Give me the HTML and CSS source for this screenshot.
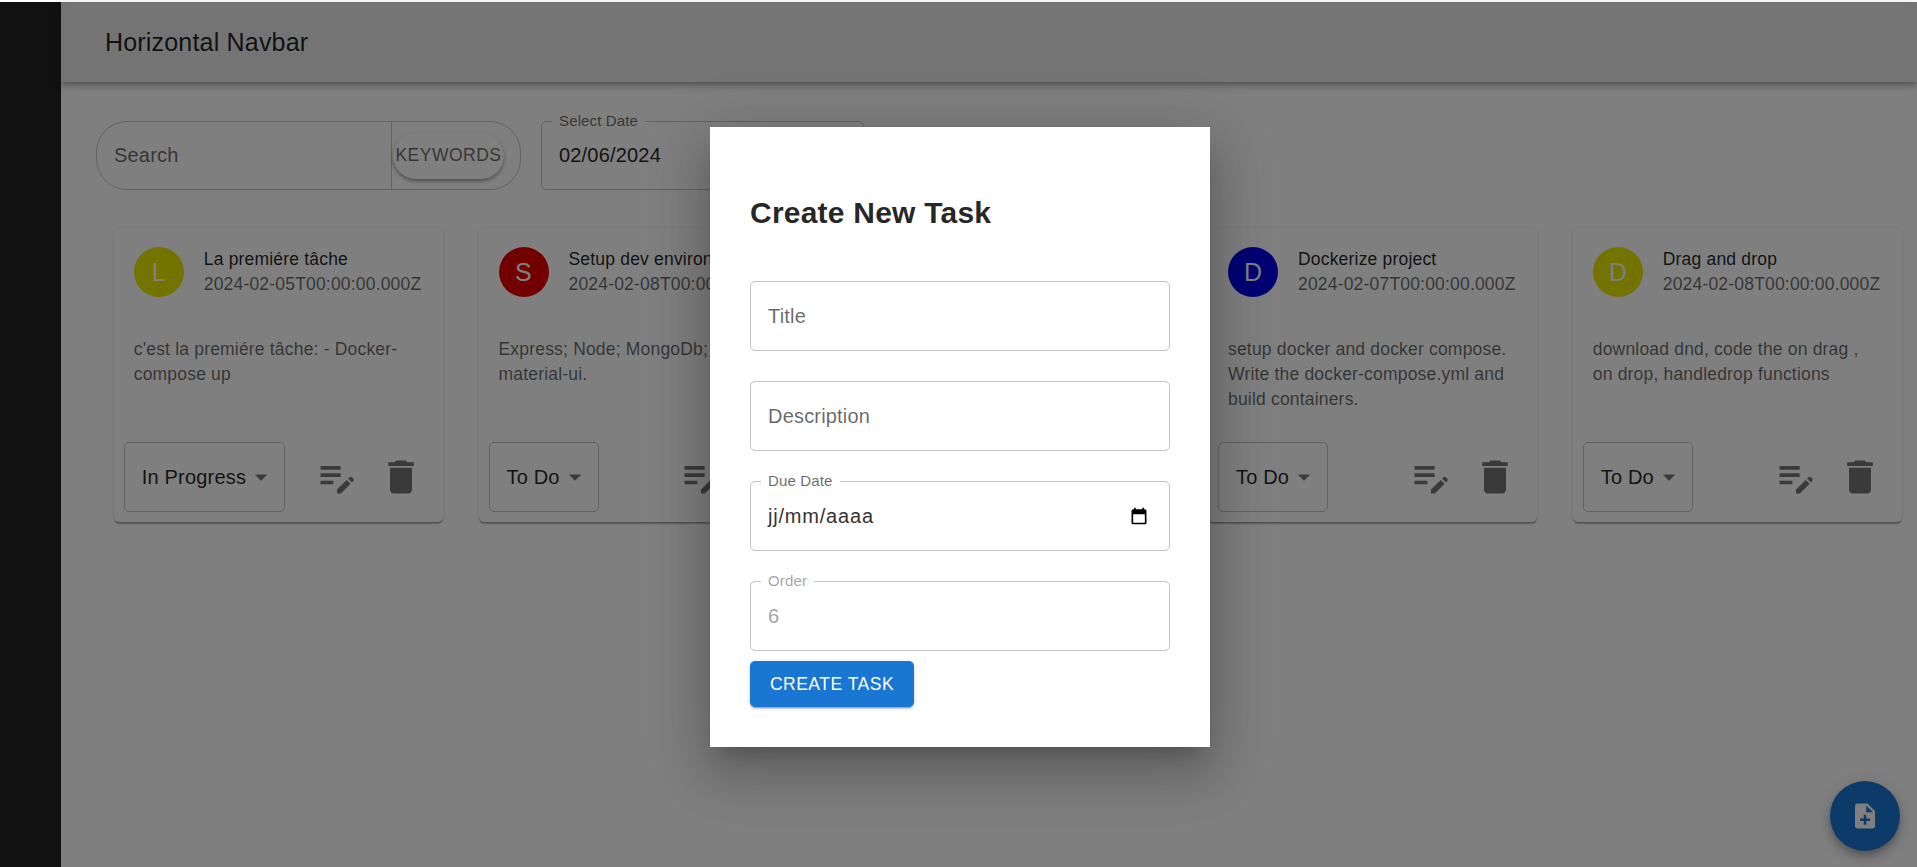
FILE: index.html
```html
<!DOCTYPE html>
<html lang="en">
<head>
  <meta charset="UTF-8">
  <meta name="viewport" content="width=device-width, initial-scale=1.0">
  <title>Task Board</title>
  <link rel="stylesheet" href="styles.css">
</head>
<body>
  <div class="app">
    <aside class="sidebar"></aside>

    <main class="main">
      <header class="navbar">Horizontal Navbar</header>

      <!-- Search + date filter -->
      <section class="filters">
        <div class="search">
          <span class="search-text">Search</span>
          <div class="search-action"><button type="button" class="keywords">KEYWORDS</button></div>
        </div>
        <div class="date-filter">
          <span class="notch-label">Select Date</span>
          <span class="date-value">02/06/2024</span>
        </div>
      </section>

      <!-- Task cards -->
      <section class="cards">
        <article class="card">
          <div class="card-head">
            <div class="avatar yellow">L</div>
            <div>
              <div class="card-title">La premiére tâche</div>
              <div class="card-date">2024-02-05T00:00:00.000Z</div>
            </div>
          </div>
          <p class="card-desc">c'est la premiére tâche: - Docker-compose up</p>
          <div class="card-actions">
            <div class="status"><span>In Progress</span><svg viewBox="0 0 24 24"><path d="M7 10l5 5 5-5z"/></svg></div>
            <button type="button" class="icon-btn push"><svg viewBox="0 0 24 24"><path d="M3 10h11v2H3zm0-2h11V6H3zm0 8h7v-2H3zm15.01-3.13.71-.71c.39-.39 1.02-.39 1.41 0l.71.71c.39.39.39 1.02 0 1.41l-.71.71zm-.71.71-5.3 5.3V21h2.12l5.3-5.3z"/></svg></button>
            <button type="button" class="icon-btn"><svg viewBox="0 0 24 24"><path d="M6 19c0 1.1.9 2 2 2h8c1.1 0 2-.9 2-2V7H6v12zM19 4h-3.5l-1-1h-5l-1 1H5v2h14V4z"/></svg></button>
          </div>
        </article>

        <article class="card">
          <div class="card-head">
            <div class="avatar red">S</div>
            <div>
              <div class="card-title">Setup dev environment</div>
              <div class="card-date">2024-02-08T00:00:00.000Z</div>
            </div>
          </div>
          <p class="card-desc">Express; Node; MongoDb;<br>material-ui.</p>
          <div class="card-actions">
            <div class="status"><span>To Do</span><svg viewBox="0 0 24 24"><path d="M7 10l5 5 5-5z"/></svg></div>
            <button type="button" class="icon-btn push"><svg viewBox="0 0 24 24"><path d="M3 10h11v2H3zm0-2h11V6H3zm0 8h7v-2H3zm15.01-3.13.71-.71c.39-.39 1.02-.39 1.41 0l.71.71c.39.39.39 1.02 0 1.41l-.71.71zm-.71.71-5.3 5.3V21h2.12l5.3-5.3z"/></svg></button>
            <button type="button" class="icon-btn"><svg viewBox="0 0 24 24"><path d="M6 19c0 1.1.9 2 2 2h8c1.1 0 2-.9 2-2V7H6v12zM19 4h-3.5l-1-1h-5l-1 1H5v2h14V4z"/></svg></button>
          </div>
        </article>

        <!-- fully behind the dialog -->
        <article class="card"></article>

        <article class="card">
          <div class="card-head">
            <div class="avatar blue">D</div>
            <div>
              <div class="card-title">Dockerize project</div>
              <div class="card-date">2024-02-07T00:00:00.000Z</div>
            </div>
          </div>
          <p class="card-desc">setup docker and docker compose. Write the docker-compose.yml and build containers.</p>
          <div class="card-actions">
            <div class="status"><span>To Do</span><svg viewBox="0 0 24 24"><path d="M7 10l5 5 5-5z"/></svg></div>
            <button type="button" class="icon-btn push"><svg viewBox="0 0 24 24"><path d="M3 10h11v2H3zm0-2h11V6H3zm0 8h7v-2H3zm15.01-3.13.71-.71c.39-.39 1.02-.39 1.41 0l.71.71c.39.39.39 1.02 0 1.41l-.71.71zm-.71.71-5.3 5.3V21h2.12l5.3-5.3z"/></svg></button>
            <button type="button" class="icon-btn"><svg viewBox="0 0 24 24"><path d="M6 19c0 1.1.9 2 2 2h8c1.1 0 2-.9 2-2V7H6v12zM19 4h-3.5l-1-1h-5l-1 1H5v2h14V4z"/></svg></button>
          </div>
        </article>

        <article class="card">
          <div class="card-head">
            <div class="avatar yellow">D</div>
            <div>
              <div class="card-title">Drag and drop</div>
              <div class="card-date">2024-02-08T00:00:00.000Z</div>
            </div>
          </div>
          <p class="card-desc">download dnd, code the on drag , on drop, handledrop functions</p>
          <div class="card-actions">
            <div class="status"><span>To Do</span><svg viewBox="0 0 24 24"><path d="M7 10l5 5 5-5z"/></svg></div>
            <button type="button" class="icon-btn push"><svg viewBox="0 0 24 24"><path d="M3 10h11v2H3zm0-2h11V6H3zm0 8h7v-2H3zm15.01-3.13.71-.71c.39-.39 1.02-.39 1.41 0l.71.71c.39.39.39 1.02 0 1.41l-.71.71zm-.71.71-5.3 5.3V21h2.12l5.3-5.3z"/></svg></button>
            <button type="button" class="icon-btn"><svg viewBox="0 0 24 24"><path d="M6 19c0 1.1.9 2 2 2h8c1.1 0 2-.9 2-2V7H6v12zM19 4h-3.5l-1-1h-5l-1 1H5v2h14V4z"/></svg></button>
          </div>
        </article>
      </section>

      <button type="button" class="fab"><svg viewBox="0 0 24 24"><path d="M14 2H6c-1.1 0-1.99.9-1.99 2L4 20c0 1.1.89 2 1.99 2H18c1.1 0 2-.9 2-2V8l-6-6zm2 14h-3v3h-2v-3H8v-2h3v-3h2v3h3v2zm-3-7V3.5L18.5 9H13z"/></svg></button>
    </main>

    <!-- Create task dialog -->
    <div class="overlay">
      <form class="modal">
        <h2 class="modal-title">Create New Task</h2>
        <div class="field"><span class="placeholder">Title</span></div>
        <div class="field"><span class="placeholder">Description</span></div>
        <div class="field">
          <span class="notch-label">Due Date</span>
          <span class="date-mask">jj/mm/aaaa</span>
          <svg class="calendar" viewBox="0 0 24 24"><path d="M19 4h-1V2h-2v2H8V2H6v2H5c-1.11 0-1.99.9-1.99 2L3 20a2 2 0 0 0 2 2h14c1.1 0 2-.9 2-2V6c0-1.1-.9-2-2-2zm0 16H5V10h14v10z"/></svg>
        </div>
        <div class="field disabled">
          <span class="notch-label">Order</span>
          <span>6</span>
        </div>
        <button type="button" class="submit">CREATE TASK</button>
      </form>
    </div>
  </div>
</body>
</html>
```

FILE: styles.css
```css
html, body {
  margin: 0;
  height: 100%;
  overflow: hidden;
}

body {
  background-color: #fff;
  padding-top: 2px;
  box-sizing: border-box;
  font-family: "Liberation Sans", Arial, sans-serif;
  color: rgba(0,0,0,0.87);
}

button {
  font-family: inherit;
  border: none;
  cursor: pointer;
}

.app {
  position: relative;
  display: flex;
  height: 865px;
}

.sidebar {
  width: 61px;
  flex: none;
  background-color: #222;
}

.main {
  flex: 1;
  min-width: 0;
  background-color: #fff;
}

.navbar {
  height: 80px;
  padding-left: 44px;
  display: flex;
  align-items: center;
  font-size: 25px;
  letter-spacing: 0.0075em;
  background-color: #e9e9e9;
  box-shadow: 0 2.5px 5px -1px rgba(0,0,0,0.2), 0 5px 6px 0 rgba(0,0,0,0.14), 0 1px 12px 0 rgba(0,0,0,0.12);
}

/* filters */
.filters {
  display: flex;
  gap: 20px;
  margin: 39px 0 0 35px;
}

.search {
  width: 425px;
  height: 69px;
  box-sizing: border-box;
  display: flex;
  justify-content: space-between;
  border: 1px solid rgba(0,0,0,0.23);
  border-radius: 31px;
}

.search-text {
  align-self: center;
  padding-left: 17px;
  font-size: 20px;
  letter-spacing: 0.00938em;
  color: rgba(0,0,0,0.6);
}

.search-action {
  width: 129px;
  box-sizing: border-box;
  display: flex;
  align-items: center;
  padding-left: 1px;
  border-left: 1px solid rgba(0,0,0,0.23);
}

.keywords {
  width: 111px;
  height: 46px;
  padding: 0;
  font-size: 17.5px;
  letter-spacing: 0.02857em;
  color: rgba(0,0,0,0.6);
  background-color: #fff;
  border-radius: 23px;
  box-shadow: 0 3px 4px -1px rgba(0,0,0,0.2), 0 2px 3px 0 rgba(0,0,0,0.14), 0 1px 6px 0 rgba(0,0,0,0.12);
}

.date-filter {
  position: relative;
  width: 323px;
  height: 69px;
  box-sizing: border-box;
  display: flex;
  align-items: center;
  padding-left: 17px;
  border: 1px solid rgba(0,0,0,0.23);
  border-radius: 5px;
  font-size: 20px;
  letter-spacing: 0.00938em;
}

.notch-label {
  position: absolute;
  top: -10px;
  left: 10px;
  padding: 0 7px;
  font-size: 15px;
  line-height: 17px;
  letter-spacing: 0.00938em;
  color: rgba(0,0,0,0.6);
  background-color: #fff;
}

/* cards */
.cards {
  display: grid;
  grid-template-columns: repeat(5, 328.75px);
  gap: 36px;
  margin: 38px 0 0 52.75px;
}

.card {
  height: 294px;
  display: flex;
  flex-direction: column;
  background-color: #fff;
  border-radius: 5px;
  box-shadow: 0 2.5px 1px -1px rgba(0,0,0,0.2), 0 1px 1px 0 rgba(0,0,0,0.14), 0 1px 4px 0 rgba(0,0,0,0.12);
}

.card-head {
  display: flex;
  gap: 20px;
  padding: 19px 20px 20px;
  font-size: 17.5px;
  line-height: 24.5px;
  letter-spacing: 0.01071em;
}

.avatar {
  width: 50px;
  height: 50px;
  flex: none;
  display: flex;
  align-items: center;
  justify-content: center;
  border-radius: 50%;
  font-size: 25px;
  color: #fff;
}

.yellow { background-color: #e6e600; }
.red { background-color: #e60000; }
.blue { background-color: #0000e6; }

.card-title {
  white-space: nowrap;
}

.card-date {
  white-space: nowrap;
  color: rgba(0,0,0,0.6);
}

.card-desc {
  flex: 1;
  margin: 0;
  padding: 20px 20px 0;
  font-size: 17.5px;
  line-height: 25px;
  letter-spacing: 0.01071em;
  color: rgba(0,0,0,0.6);
}

.card-actions {
  display: flex;
  align-items: center;
  padding: 0 10px 10px;
}

.status {
  height: 70px;
  box-sizing: border-box;
  display: flex;
  align-items: center;
  padding: 0 8px 0 17px;
  border: 1px solid rgba(0,0,0,0.23);
  border-radius: 5px;
  font-size: 20px;
  letter-spacing: 0.00938em;
}

.status svg {
  width: 30px;
  height: 30px;
  fill: rgba(0,0,0,0.54);
}

.icon-btn {
  width: 64px;
  height: 64px;
  padding: 10px;
  background: none;
}

.icon-btn svg {
  display: block;
  width: 44px;
  height: 44px;
  fill: rgba(0,0,0,0.54);
}

.push {
  margin-left: auto;
}

.fab {
  position: absolute;
  right: 17px;
  bottom: 16px;
  width: 70px;
  height: 70px;
  padding: 0;
  display: flex;
  align-items: center;
  justify-content: center;
  border-radius: 50%;
  background-color: #1976d2;
  box-shadow: 0 4px 6px -1px rgba(0,0,0,0.2), 0 7.5px 12px 0 rgba(0,0,0,0.14), 0 2px 22px 0 rgba(0,0,0,0.12);
}

.fab svg {
  width: 30px;
  height: 30px;
  fill: #fff;
}

/* dialog */
.overlay {
  position: absolute;
  inset: 0;
  display: flex;
  align-items: center;
  justify-content: center;
  padding: 5px 0 0 3px;
  box-sizing: border-box;
  background-color: rgba(0,0,0,0.5);
}

.modal {
  width: 500px;
  height: 620px;
  box-sizing: border-box;
  padding: 40px;
  display: flex;
  flex-direction: column;
  gap: 30px;
  background-color: #fff;
  box-shadow: 0 14px 19px -9px rgba(0,0,0,0.2), 0 30px 48px 4px rgba(0,0,0,0.14), 0 11px 58px 10px rgba(0,0,0,0.12);
}

.modal-title {
  margin: 24px 0 16px;
  font-size: 30px;
  line-height: 44px;
  font-weight: bold;
  letter-spacing: 0.0075em;
}

.field {
  position: relative;
  height: 70px;
  flex: none;
  box-sizing: border-box;
  display: flex;
  align-items: center;
  justify-content: space-between;
  padding: 0 20px 0 17px;
  border: 1px solid rgba(0,0,0,0.23);
  border-radius: 5px;
  font-size: 20px;
  letter-spacing: 0.00938em;
}

.placeholder {
  color: rgba(0,0,0,0.6);
}

.date-mask {
  letter-spacing: 0.04em;
  color: #333;
}

.calendar {
  width: 20px;
  height: 20px;
  fill: #000;
}

.disabled,
.disabled .notch-label {
  color: rgba(0,0,0,0.38);
}

.submit {
  width: 164px;
  height: 46px;
  margin-top: -20px;
  padding: 0;
  font-size: 17.5px;
  letter-spacing: 0.02857em;
  color: #fff;
  background-color: #1976d2;
  border-radius: 5px;
  box-shadow: 0 3px 1px -2px rgba(0,0,0,0.2), 0 2px 2px 0 rgba(0,0,0,0.14), 0 1px 5px 0 rgba(0,0,0,0.12);
}
```
